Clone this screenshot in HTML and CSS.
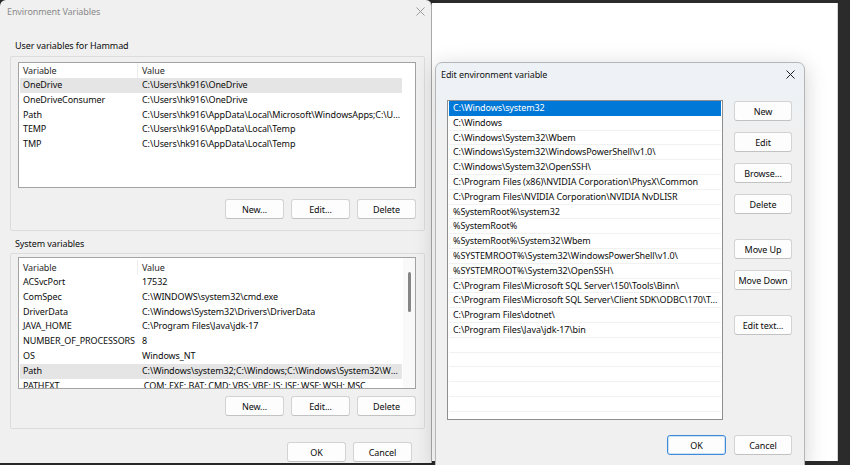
FILE: index.html
```html
<!DOCTYPE html>
<html lang="en">
<head>
    <meta charset="UTF-8">
    <title>Environment Variables</title>
    <link rel="stylesheet" href="styles.css">
</head>
<body>
    <!-- Environment Variables dialog (inactive) -->
    <div class="env">
        <div class="env-title">
            <span>Environment Variables</span>
            <svg class="close" width="9" height="9" viewBox="0 0 9 9"><path d="M0.5 0.5L8.5 8.5M8.5 0.5L0.5 8.5" stroke="#9a9a9a" stroke-width="1"/></svg>
        </div>

        <div class="group-label">User variables for Hammad</div>
        <div class="group">
            <div class="list user-list">
                <div class="lv-head"><span class="c1">Variable</span><span class="c2">Value</span></div>
                <div class="lv-row hover"><span class="c1">OneDrive</span><span class="c2">C:\Users\hk916\OneDrive</span></div>
                <div class="lv-row"><span class="c1">OneDriveConsumer</span><span class="c2">C:\Users\hk916\OneDrive</span></div>
                <div class="lv-row"><span class="c1">Path</span><span class="c2">C:\Users\hk916\AppData\Local\Microsoft\WindowsApps;C:\Users\hk916\AppData\Local</span></div>
                <div class="lv-row"><span class="c1">TEMP</span><span class="c2">C:\Users\hk916\AppData\Local\Temp</span></div>
                <div class="lv-row"><span class="c1">TMP</span><span class="c2">C:\Users\hk916\AppData\Local\Temp</span></div>
            </div>
            <div class="btn-row">
                <button class="btn">New...</button>
                <button class="btn">Edit...</button>
                <button class="btn">Delete</button>
            </div>
        </div>

        <div class="group-label sys-label">System variables</div>
        <div class="group sys-group">
            <div class="list sys-list">
                <div class="lv-head"><span class="c1">Variable</span><span class="c2">Value</span></div>
                <div class="lv-row"><span class="c1">ACSvcPort</span><span class="c2">17532</span></div>
                <div class="lv-row"><span class="c1">ComSpec</span><span class="c2">C:\WINDOWS\system32\cmd.exe</span></div>
                <div class="lv-row"><span class="c1">DriverData</span><span class="c2">C:\Windows\System32\Drivers\DriverData</span></div>
                <div class="lv-row"><span class="c1">JAVA_HOME</span><span class="c2">C:\Program Files\Java\jdk-17</span></div>
                <div class="lv-row"><span class="c1">NUMBER_OF_PROCESSORS</span><span class="c2">8</span></div>
                <div class="lv-row"><span class="c1">OS</span><span class="c2">Windows_NT</span></div>
                <div class="lv-row hover"><span class="c1">Path</span><span class="c2">C:\Windows\system32;C:\Windows;C:\Windows\System32\Wbem;C:\Windows</span></div>
                <div class="lv-row"><span class="c1">PATHEXT</span><span class="c2">.COM;.EXE;.BAT;.CMD;.VBS;.VBE;.JS;.JSE;.WSF;.WSH;.MSC</span></div>
                <div class="scroll-track"></div>
                <div class="scroll-thumb"></div>
            </div>
            <div class="btn-row">
                <button class="btn">New...</button>
                <button class="btn">Edit...</button>
                <button class="btn">Delete</button>
            </div>
        </div>

        <div class="env-foot">
            <button class="btn">OK</button>
            <button class="btn">Cancel</button>
        </div>
    </div>

    <!-- Window behind the edit dialog -->
    <div class="back"></div>

    <!-- Edit environment variable dialog -->
    <div class="edit">
        <div class="edit-title">
            <span>Edit environment variable</span>
            <svg class="close" width="9" height="9" viewBox="0 0 9 9"><path d="M0.5 0.5L8.5 8.5M8.5 0.5L0.5 8.5" stroke="#1f1f1f" stroke-width="1"/></svg>
        </div>
        <div class="edit-body">
            <div class="path-list">
                <div class="p-row selected">C:\Windows\system32</div>
                <div class="p-row">C:\Windows</div>
                <div class="p-row">C:\Windows\System32\Wbem</div>
                <div class="p-row">C:\Windows\System32\WindowsPowerShell\v1.0\</div>
                <div class="p-row">C:\Windows\System32\OpenSSH\</div>
                <div class="p-row">C:\Program Files (x86)\NVIDIA Corporation\PhysX\Common</div>
                <div class="p-row">C:\Program Files\NVIDIA Corporation\NVIDIA NvDLISR</div>
                <div class="p-row">%SystemRoot%\system32</div>
                <div class="p-row">%SystemRoot%</div>
                <div class="p-row">%SystemRoot%\System32\Wbem</div>
                <div class="p-row">%SYSTEMROOT%\System32\WindowsPowerShell\v1.0\</div>
                <div class="p-row">%SYSTEMROOT%\System32\OpenSSH\</div>
                <div class="p-row">C:\Program Files\Microsoft SQL Server\150\Tools\Binn\</div>
                <div class="p-row">C:\Program Files\Microsoft SQL Server\Client SDK\ODBC\170\Tools\Binn\</div>
                <div class="p-row">C:\Program Files\dotnet\</div>
                <div class="p-row">C:\Program Files\Java\jdk-17\bin</div>
                <div class="p-row"></div>
                <div class="p-row"></div>
                <div class="p-row"></div>
                <div class="p-row"></div>
                <div class="p-row"></div>
                <div class="p-row"></div>
            </div>
            <div class="side-btns">
                <button class="btn side">New</button>
                <button class="btn side gap-s">Edit</button>
                <button class="btn side gap-s">Browse...</button>
                <button class="btn side gap-s">Delete</button>
                <button class="btn side gap-l">Move Up</button>
                <button class="btn side gap-s">Move Down</button>
                <button class="btn side gap-l">Edit text...</button>
            </div>
        </div>
        <div class="edit-foot">
            <button class="btn default">OK</button>
            <button class="btn side">Cancel</button>
        </div>
    </div>
</body>
</html>
```

FILE: styles.css
```css
/* Page / desktop */
body {
    margin: 0;
    width: 850px;
    height: 465px;
    overflow: hidden;
    position: relative;
    background: #2b2b2b;
    font-family: "Noto Sans", sans-serif;
    font-size: 9px;
    letter-spacing: -0.1px;
    color: #0c0c0c;
}

/* Generic button */
.btn {
    width: 59px;
    height: 20px;
    box-sizing: border-box;
    padding: 0;
    border: 1px solid #d3d3d3;
    border-bottom-color: #c2c2c2;
    border-radius: 3px;
    background: #fdfdfd;
    font: inherit;
    letter-spacing: inherit;
    color: #0c0c0c;
}

.close {
    display: block;
}

/* Environment Variables dialog */
.env {
    position: absolute;
    left: 0;
    top: 0;
    width: 431px;
    height: 463px;
    background: #f0f0f0;
    border-right: 1px solid #a9a9a9;
    border-radius: 6px 6px 0 0;
    box-shadow: 1px 0 4px rgba(0, 0, 0, 0.25);
    display: flex;
    flex-direction: column;
}

.env-title {
    height: 22px;
    display: flex;
    align-items: center;
    justify-content: space-between;
    padding: 0 6px 0 7px;
    color: #8a8a8a;
}

.group-label {
    margin: 17px 0 0 15px;
    line-height: 14px;
}

.group {
    margin: 3px 6px 0 10px;
    border: 1px solid #dcdcdc;
    border-radius: 2px;
    padding: 5px 8px 11px 7px;
}

.sys-label {
    margin-top: 6px;
}

.sys-group {
    margin-top: 2px;
    padding-top: 3px;
    padding-bottom: 12px;
}

/* List views */
.list {
    position: relative;
    height: 126px;
    box-sizing: border-box;
    background: #fff;
    border: 1px solid #a3a3a3;
    overflow: hidden;
    padding-left: 1px;
}

.sys-list {
    height: 132px;
    padding-top: 2px;
}

.lv-head, .lv-row {
    display: flex;
    width: 382px;
    white-space: nowrap;
}

.lv-head {
    height: 15px;
    line-height: 15px;
    color: #2a2a2a;
}

.lv-row {
    height: 14.8px;
    line-height: 14.8px;
}

.lv-row.hover {
    background: #e5e5e5;
}

.c1 {
    width: 118px;
    flex: none;
    box-sizing: border-box;
    padding-left: 3px;
}

.lv-head .c1 {
    border-right: 1px solid #ededed;
}

.c2 {
    width: 264px;
    box-sizing: border-box;
    padding-left: 4px;
    overflow: hidden;
    text-overflow: ellipsis;
}

.scroll-track {
    position: absolute;
    right: 0;
    top: 0;
    bottom: 0;
    width: 12px;
    background: #f9f9f9;
}

.scroll-thumb {
    position: absolute;
    right: 4px;
    top: 14px;
    width: 3px;
    height: 40px;
    border-radius: 2px;
    background: #858585;
}

.btn-row {
    display: flex;
    justify-content: flex-end;
    gap: 7px;
    margin-top: 11px;
}

.sys-group .btn-row {
    margin-top: 7px;
}

.env-foot {
    display: flex;
    justify-content: flex-end;
    gap: 7px;
    margin-top: 13px;
    padding-right: 19px;
}

/* Window behind */
.back {
    position: absolute;
    left: 432px;
    top: 3px;
    width: 405px;
    height: 458px;
    background: #fff;
    border-right: 1px solid #d4d4d4;
}

/* Edit environment variable dialog */
.edit {
    position: absolute;
    left: 435px;
    top: 62px;
    width: 370px;
    height: 405px;
    box-sizing: border-box;
    background: linear-gradient(#edf2f7 0, #eef1f4 40px, #f0f0f0 70px);
    border: 1px solid #b5b5b5;
    border-radius: 7px 7px 0 0;
    box-shadow: 0 4px 22px rgba(0, 0, 0, 0.18);
    display: flex;
    flex-direction: column;
}

.edit-title {
    height: 22px;
    display: flex;
    align-items: center;
    justify-content: space-between;
    padding: 0 9px 0 5px;
    color: #111;
}

.edit-body {
    display: flex;
    gap: 11px;
    padding: 15px 12px 0 11px;
}

.path-list {
    width: 276px;
    height: 320px;
    flex: none;
    box-sizing: border-box;
    background: #fff;
    border: 1px solid #8f8f8f;
    overflow: hidden;
}

.p-row {
    height: 14.8px;
    line-height: 14.8px;
    box-sizing: border-box;
    margin: 0 1px;
    padding-left: 4px;
    border-bottom: 1px solid #f1f1f1;
    white-space: nowrap;
    overflow: hidden;
    text-overflow: ellipsis;
}

.p-row.selected {
    background: #0078d7;
    color: #fff;
    border-bottom-color: #0078d7;
}

.side-btns {
    display: flex;
    flex-direction: column;
    padding-top: 1px;
}

.btn.side {
    width: 58px;
}

.gap-s {
    margin-top: 11px;
}

.gap-l {
    margin-top: 25px;
}

.edit-foot {
    display: flex;
    justify-content: flex-end;
    gap: 8px;
    margin-top: 15px;
    padding-right: 12px;
}

.btn.default {
    border-color: #3f8bd8;
    box-shadow: inset 0 0 0 1px #cfe1f5;
}
```
